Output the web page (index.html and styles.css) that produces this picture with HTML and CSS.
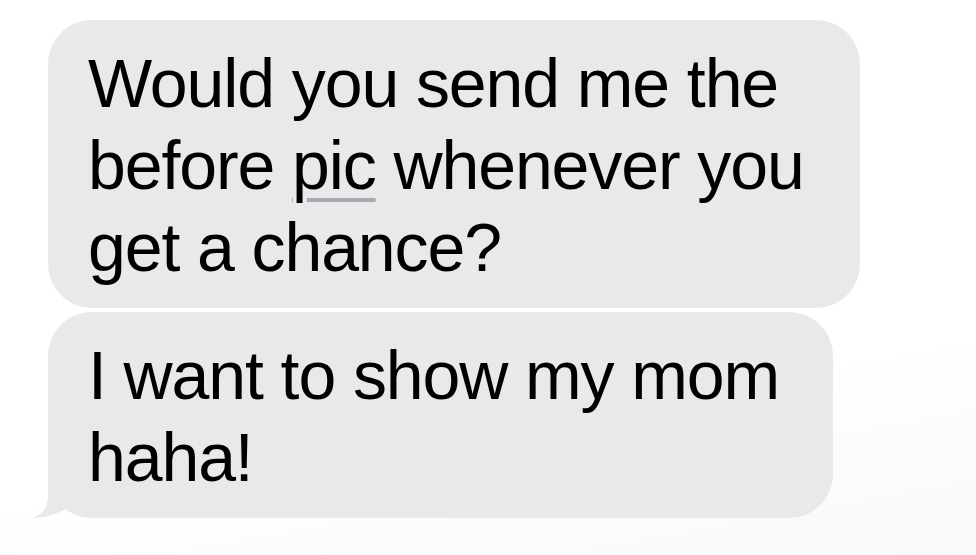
FILE: index.html
```html
<!DOCTYPE html>
<html lang="en">
<head>
<meta charset="UTF-8">
<meta name="viewport" content="width=device-width,initial-scale=1.0">
<title>Messages</title>
<link rel="stylesheet" href="styles.css">
</head>
<body>

<!-- ====== Thread ====== -->
<main class="thread">
  <div class="bubble bubble-first">
    Would you send me the<br>
    before <span class="link">pic</span> whenever you<br>
    get a chance?
  </div>

  <div class="bubble bubble-last">
    I want to show my mom<br>
    haha!
    <svg class="tail" viewBox="0 0 60 50" width="60" height="50" aria-hidden="true">
      <path d="M16 0 L16 28 C16 40 10 47 0 50 C13 50 26 46 35 40 L40 10 Z"/>
    </svg>
  </div>
</main>

</body>
</html>
```

FILE: styles.css
```css
:root{
  --bg     : #ffffff;
  --bubble : #e9e9eb;
  --text   : #000000;
  --link   : #a9a9ad;
}
*{box-sizing:border-box;}
html,body{margin:0;height:100%;background:var(--bg);}
body{
  font-family:"Liberation Sans",Arial,Helvetica,sans-serif;
  color:var(--text);
  background:linear-gradient(170deg,#fff 70%,#f8f8f8 100%);
}

.thread{
  display:flex;flex-direction:column;align-items:flex-start;gap:4px;
  padding:20px 0 0 48px;
}

.bubble{
  position:relative;
  background:var(--bubble);
  border-radius:44px;
  padding:22px 0 20px 40px;
  font-size:68px;line-height:82px;letter-spacing:-1.1px;
  white-space:nowrap;
}
.bubble-first{width:812px;}
.bubble-last{width:785px;}

.link{
  text-decoration:underline;
  text-decoration-color:var(--link);
  text-decoration-thickness:4px;
  text-underline-offset:9px;
  text-decoration-skip-ink:auto;
}

.tail{
  position:absolute;left:-16px;bottom:0;
  fill:var(--bubble);
}
```
